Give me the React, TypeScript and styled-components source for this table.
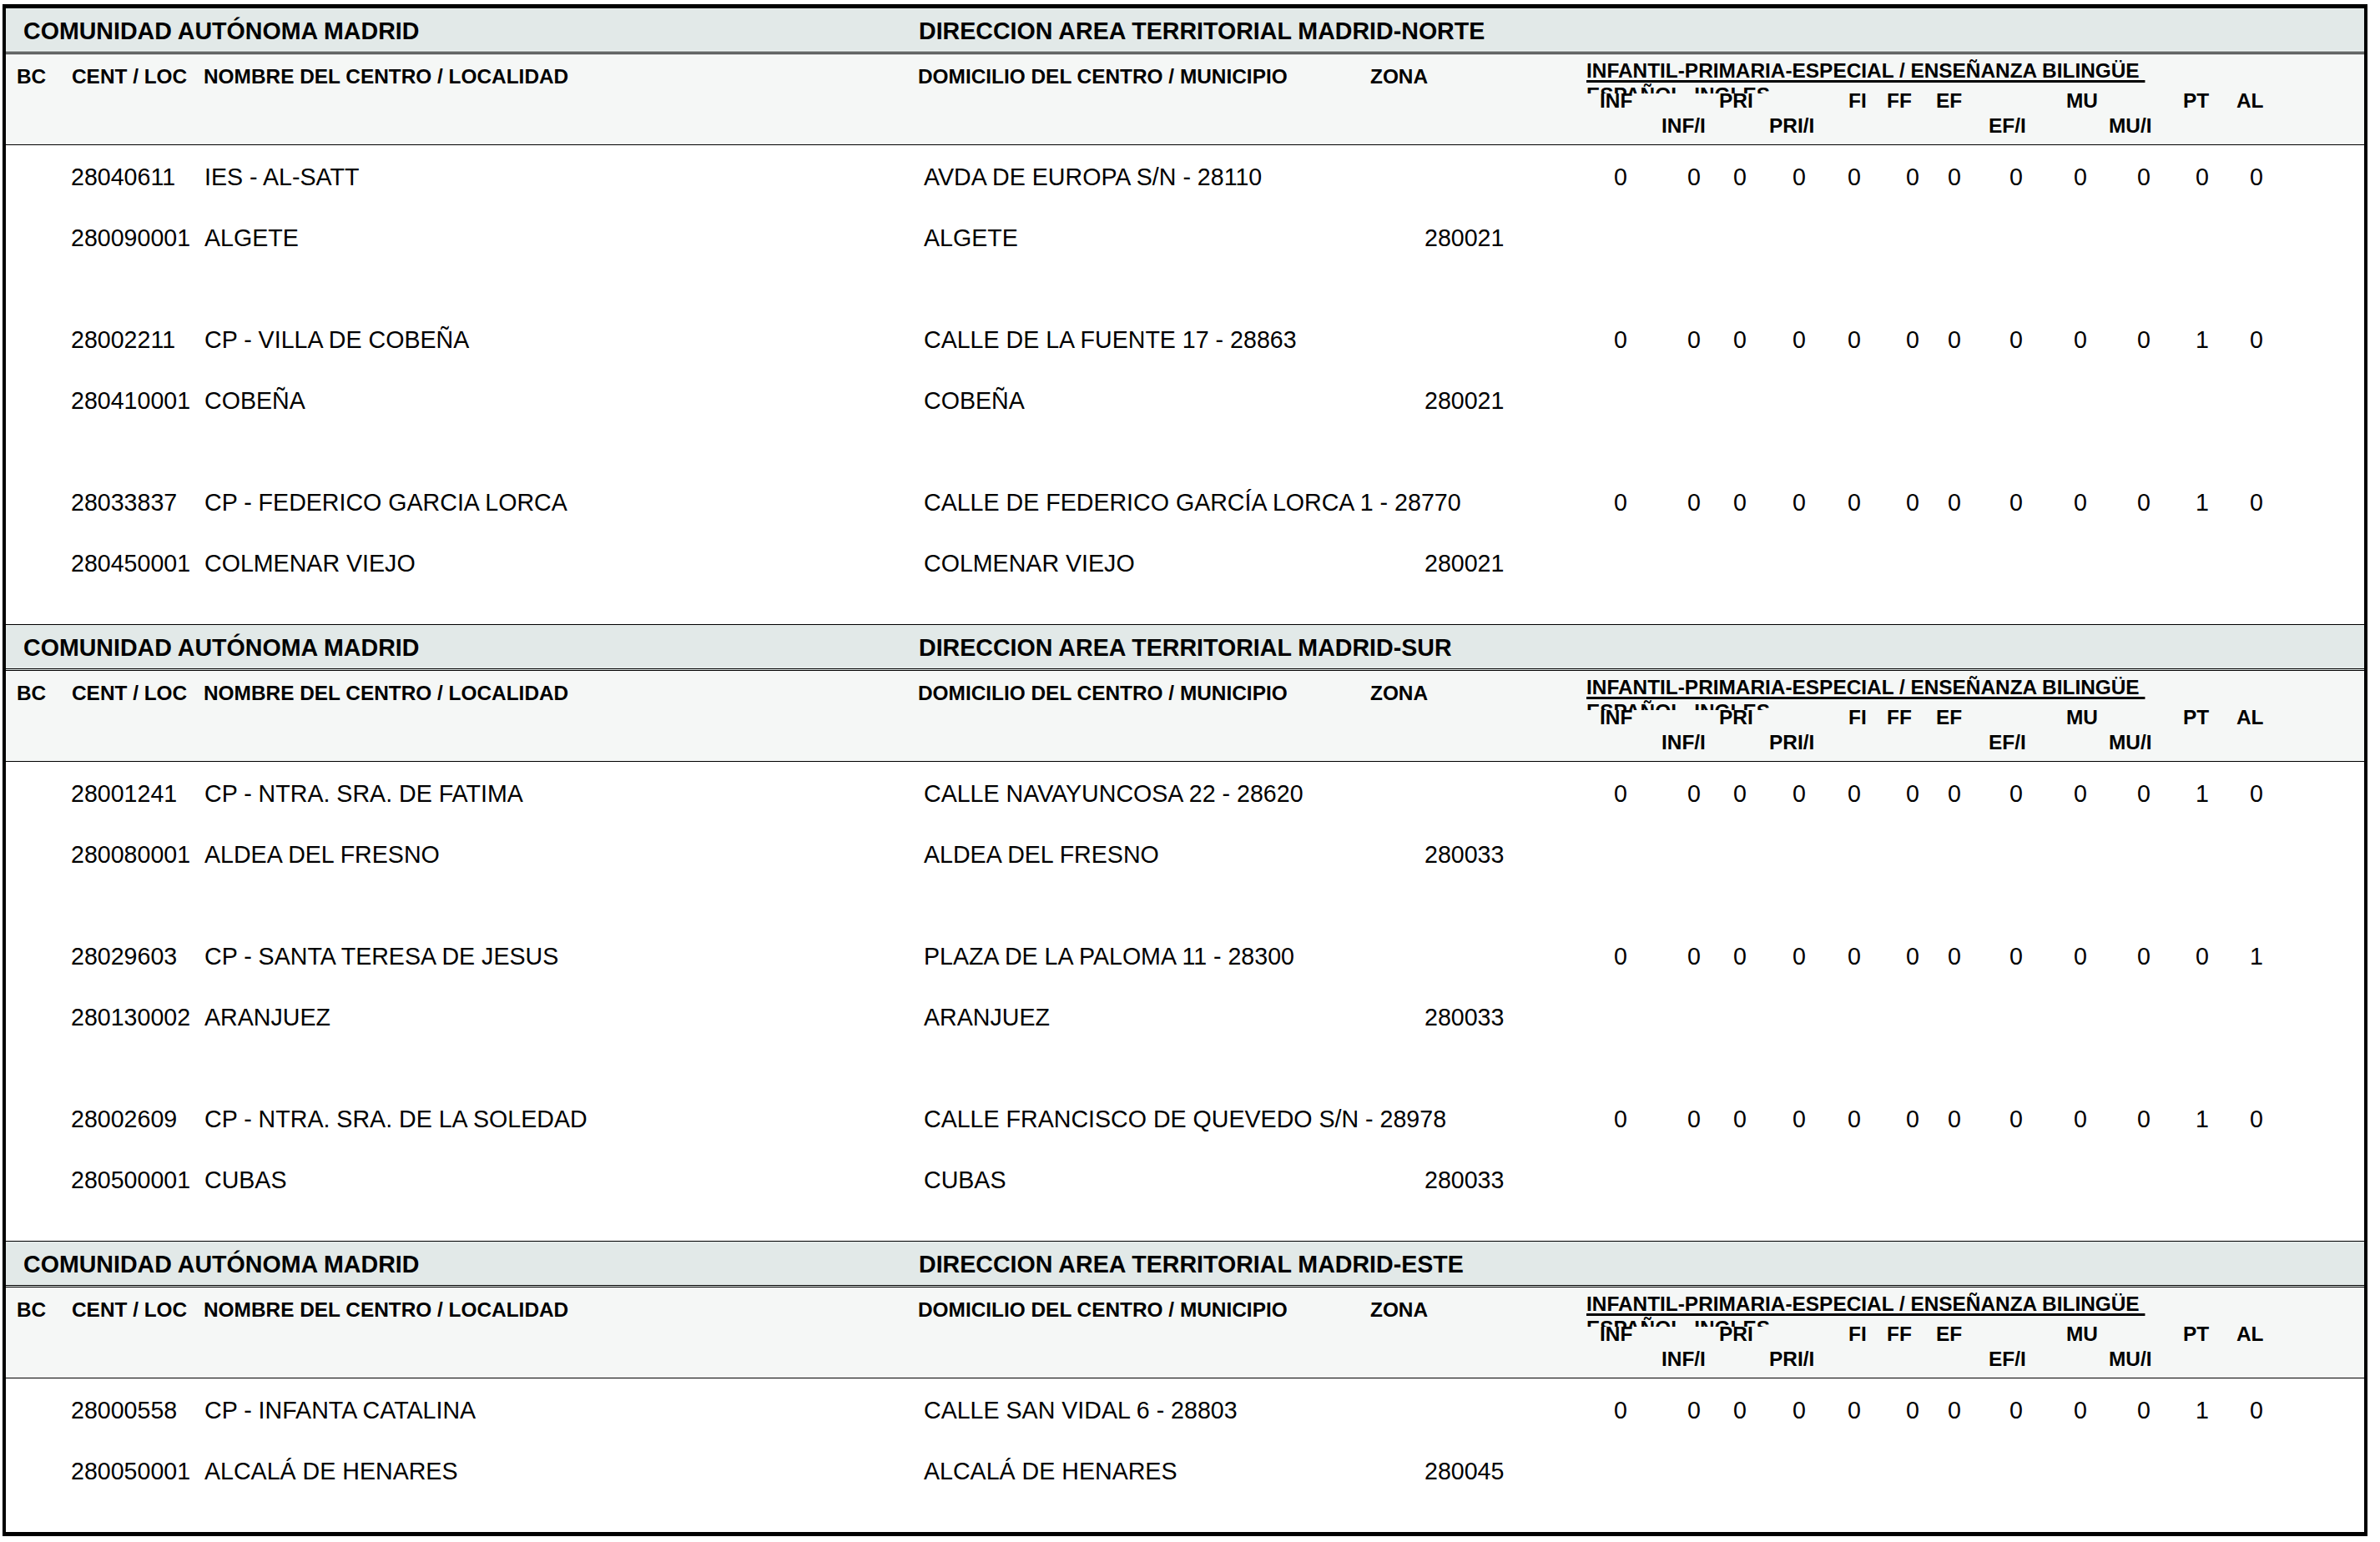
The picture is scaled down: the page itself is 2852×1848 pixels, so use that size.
import React from "react";
import styled, { createGlobalStyle } from "styled-components";

const GlobalStyle = createGlobalStyle`
  html, body {
    margin: 0;
    padding: 0;
    background: #ffffff;
  }
  body {
    font-family: "Liberation Sans", Arial, sans-serif;
    color: #000;
  }
`;

const Sheet = styled.div`
  box-sizing: border-box;
  width: 2834px;
  margin: 5px 0 0 3px;
  border-style: solid;
  border-color: #000;
  border-width: 5px 4px;
  background: #fff;
`;

const Section = styled.section<{ $first?: boolean }>`
  border-top: ${(p) => (p.$first ? "none" : "1px solid #000")};
`;

const TitleBar = styled.div`
  box-sizing: border-box;
  height: 55px;
  padding: 13px 0 0 21px;
  display: grid;
  grid-template-columns: 1073px 1fr;
  background: #e2e9e8;
  border-bottom: 3px double #000;
  font-weight: bold;
  font-size: 28.6px;
  line-height: 28px;
  white-space: nowrap;
`;

const ColumnHead = styled.div`
  box-sizing: border-box;
  height: 109px;
  padding: 15px 0 0 13px;
  display: grid;
  grid-template-columns: 66px 158px 856px 542px 259px 1fr;
  align-items: start;
  background: #f5f7f6;
  border-bottom: 1px solid #000;
  font-weight: bold;
  font-size: 24.4px;
  line-height: 24px;
  white-space: nowrap;
`;

const NumHead = styled.div`
  margin-top: -7px;
  display: flex;
  flex-direction: column;
`;

const GroupTitle = styled.div`
  white-space: pre;
  text-decoration: underline;
  text-decoration-thickness: 3px;
  text-underline-offset: 3px;
`;

const LangLine = styled.div`
  box-sizing: border-box;
  margin-top: 1px;
  height: 14px;
  padding-top: 4px;
  overflow: hidden;
  white-space: pre;
`;

const LabelTrack = styled.div<{ $cols: string; $pad: number; $top: number }>`
  display: grid;
  grid-template-columns: ${(p) => p.$cols};
  padding-left: ${(p) => p.$pad}px;
  margin-top: ${(p) => p.$top}px;
`;

const Body = styled.div`
  display: flex;
  flex-direction: column;
  gap: 82px;
  padding: 18px 0 53px;
  font-size: 28.6px;
  line-height: 40px;
`;

const Record = styled.div`
  display: flex;
  flex-direction: column;
  gap: 33px;
`;

const DataRow = styled.div`
  display: grid;
  padding-left: 78px;
  grid-template-columns: 160px 862px 600px 227px 1fr;
  white-space: nowrap;
`;

const Counts = styled.div<{ $cols: string }>`
  display: grid;
  grid-template-columns: ${(p) => p.$cols};
`;

// turns a list of x offsets into grid tracks
const track = (xs: number[]) =>
  xs
    .slice(1)
    .map((x, i) => `${x - xs[i]}px`)
    .join(" ") + " auto";

const ROW1 = [
  ["INF", 16],
  ["PRI", 159],
  ["FI", 314],
  ["FF", 360],
  ["EF", 419],
  ["MU", 575],
  ["PT", 715],
  ["AL", 779],
] as const;

const ROW2 = [
  ["INF/I", 90],
  ["PRI/I", 219],
  ["EF/I", 482],
  ["MU/I", 626],
] as const;

const COUNT_X = [0, 88, 143, 214, 280, 350, 400, 474, 551, 627, 697, 762];

interface Centre {
  code: string;
  name: string;
  address: string;
  loc: string;
  locality: string;
  municipality: string;
  zone: string;
  counts: number[];
}

interface Area {
  title: string;
  centres: Centre[];
}

const zeros = (pt: number, al: number) => [0, 0, 0, 0, 0, 0, 0, 0, 0, 0, pt, al];

const AREAS: Area[] = [
  {
    title: "DIRECCION AREA TERRITORIAL MADRID-NORTE",
    centres: [
      {
        code: "28040611",
        name: "IES - AL-SATT",
        address: "AVDA DE EUROPA S/N - 28110",
        loc: "280090001",
        locality: "ALGETE",
        municipality: "ALGETE",
        zone: "280021",
        counts: zeros(0, 0),
      },
      {
        code: "28002211",
        name: "CP - VILLA DE COBEÑA",
        address: "CALLE DE LA FUENTE 17 - 28863",
        loc: "280410001",
        locality: "COBEÑA",
        municipality: "COBEÑA",
        zone: "280021",
        counts: zeros(1, 0),
      },
      {
        code: "28033837",
        name: "CP - FEDERICO GARCIA LORCA",
        address: "CALLE DE FEDERICO GARCÍA LORCA 1 - 28770",
        loc: "280450001",
        locality: "COLMENAR VIEJO",
        municipality: "COLMENAR VIEJO",
        zone: "280021",
        counts: zeros(1, 0),
      },
    ],
  },
  {
    title: "DIRECCION AREA TERRITORIAL MADRID-SUR",
    centres: [
      {
        code: "28001241",
        name: "CP - NTRA. SRA. DE FATIMA",
        address: "CALLE NAVAYUNCOSA 22 - 28620",
        loc: "280080001",
        locality: "ALDEA DEL FRESNO",
        municipality: "ALDEA DEL FRESNO",
        zone: "280033",
        counts: zeros(1, 0),
      },
      {
        code: "28029603",
        name: "CP - SANTA TERESA DE JESUS",
        address: "PLAZA DE LA PALOMA 11 - 28300",
        loc: "280130002",
        locality: "ARANJUEZ",
        municipality: "ARANJUEZ",
        zone: "280033",
        counts: zeros(0, 1),
      },
      {
        code: "28002609",
        name: "CP - NTRA. SRA. DE LA SOLEDAD",
        address: "CALLE FRANCISCO DE QUEVEDO S/N - 28978",
        loc: "280500001",
        locality: "CUBAS",
        municipality: "CUBAS",
        zone: "280033",
        counts: zeros(1, 0),
      },
    ],
  },
  {
    title: "DIRECCION AREA TERRITORIAL MADRID-ESTE",
    centres: [
      {
        code: "28000558",
        name: "CP - INFANTA CATALINA",
        address: "CALLE SAN VIDAL 6 - 28803",
        loc: "280050001",
        locality: "ALCALÁ DE HENARES",
        municipality: "ALCALÁ DE HENARES",
        zone: "280045",
        counts: zeros(1, 0),
      },
    ],
  },
];

const HeadLabels: React.FC = () => (
  <ColumnHead>
    <span>BC</span>
    <span>CENT / LOC</span>
    <span>NOMBRE DEL CENTRO / LOCALIDAD</span>
    <span>DOMICILIO DEL CENTRO / MUNICIPIO</span>
    <span>ZONA</span>
    <NumHead>
      <GroupTitle>{"INFANTIL-PRIMARIA-ESPECIAL / ENSEÑANZA BILINGÜE "}</GroupTitle>
      <LangLine>{"ESPAÑOL  INGLES"}</LangLine>
      <LabelTrack $cols={track(ROW1.map((r) => r[1]))} $pad={ROW1[0][1]} $top={-3}>
        {ROW1.map(([label]) => (
          <span key={label}>{label}</span>
        ))}
      </LabelTrack>
      <LabelTrack $cols={track(ROW2.map((r) => r[1]))} $pad={ROW2[0][1]} $top={6}>
        {ROW2.map(([label]) => (
          <span key={label}>{label}</span>
        ))}
      </LabelTrack>
    </NumHead>
  </ColumnHead>
);

const CentreRecord: React.FC<{ centre: Centre }> = ({ centre }) => (
  <Record>
    <DataRow>
      <span>{centre.code}</span>
      <span>{centre.name}</span>
      <span>{centre.address}</span>
      <span />
      <Counts $cols={track(COUNT_X)}>
        {centre.counts.map((n, i) => (
          <span key={i}>{n}</span>
        ))}
      </Counts>
    </DataRow>
    <DataRow>
      <span>{centre.loc}</span>
      <span>{centre.locality}</span>
      <span>{centre.municipality}</span>
      <span>{centre.zone}</span>
      <span />
    </DataRow>
  </Record>
);

const App: React.FC = () => (
  <>
    <GlobalStyle />
    <Sheet>
      {AREAS.map((area, i) => (
        <Section key={area.title} $first={i === 0}>
          <TitleBar>
            <span>COMUNIDAD AUTÓNOMA MADRID</span>
            <span>{area.title}</span>
          </TitleBar>
          <HeadLabels />
          <Body>
            {area.centres.map((c) => (
              <CentreRecord key={c.code} centre={c} />
            ))}
          </Body>
        </Section>
      ))}
    </Sheet>
  </>
);

export default App;
